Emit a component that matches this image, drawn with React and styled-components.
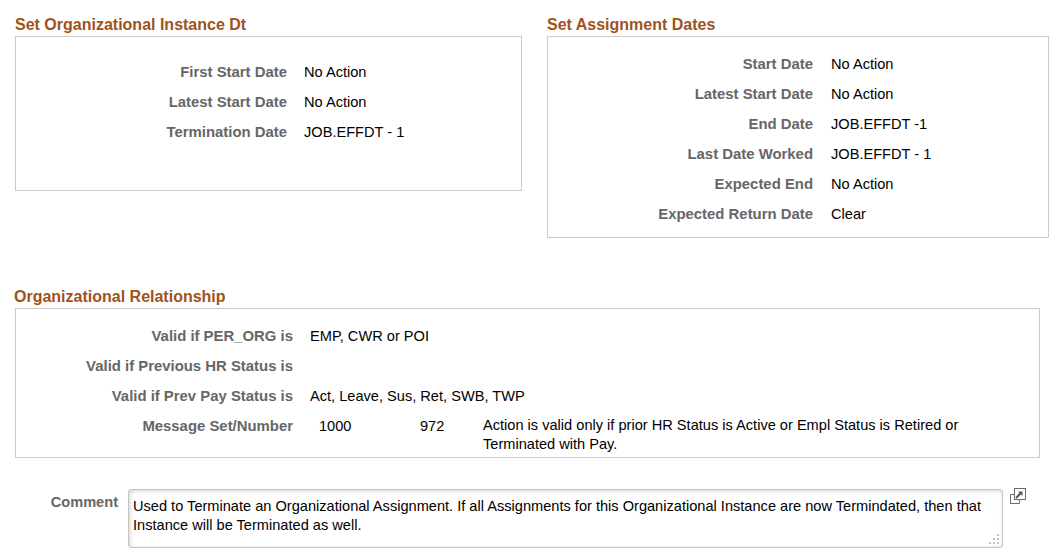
import React from 'react';
import styled, { createGlobalStyle } from 'styled-components';

const GlobalStyle = createGlobalStyle`
  html, body {
    margin: 0;
    padding: 0;
    background: #fff;
    font-family: "Liberation Sans", Arial, sans-serif;
  }
`;

const Page = styled.div`
  width: 1060px;
  height: 559px;
  overflow: hidden;
  padding-top: 16px;
  box-sizing: border-box;
`;

const TopRow = styled.div`
  display: flex;
  align-items: flex-start;
  gap: 25px;
  padding-left: 15px;
  height: 272px;
`;

const Section = styled.section`
  width: ${props => props.$width}px;
`;

const Title = styled.h2`
  margin: 0 0 2px ${props => props.$shift || 0}px;
  font-size: 16px;
  line-height: 18px;
  font-weight: bold;
  color: #a0521b;
`;

const Box = styled.div`
  box-sizing: border-box;
  height: ${props => props.$height}px;
  margin-left: ${props => props.$left || 0}px;
  padding-top: ${props => props.$top}px;
  border: 1px solid #cbcbcb;
`;

const Row = styled.div`
  display: flex;
  height: 30px;
  font-size: 14.6px;
  line-height: 20px;
`;

const Label = styled.div`
  flex: none;
  width: ${props => props.$width}px;
  text-align: right;
  font-size: 14.9px;
  font-weight: bold;
  color: #666;
`;

const Value = styled.div`
  margin-left: ${props => props.$gap}px;
  color: #000;
  white-space: nowrap;
`;

const MessageRow = styled(Row)`
  height: auto;
`;

const MessageNumber = styled.div`
  flex: none;
  width: ${props => props.$width}px;
  margin-left: ${props => props.$gap || 0}px;
  color: #000;
`;

const MessageText = styled.div`
  width: 510px;
  line-height: 19px;
  color: #000;
`;

const CommentRow = styled.div`
  display: flex;
  align-items: flex-start;
  margin-top: 31px;
  padding-left: 15px;
`;

const CommentLabel = styled.div`
  width: 103px;
  padding-top: 3px;
  text-align: right;
  font-size: 14.6px;
  line-height: 20px;
  font-weight: bold;
  color: #666;
`;

const CommentBox = styled.div`
  position: relative;
  box-sizing: border-box;
  flex: none;
  width: 875px;
  height: 59px;
  margin-left: 10px;
  padding: 7px 4px;
  border: 1px solid #c4c4c4;
  border-radius: 3px;
  box-shadow: inset 1px 1px 4px rgba(0, 0, 0, 0.18);
  font-size: 14.6px;
  line-height: 19px;
  color: #000;
`;

const Grip = styled.svg`
  position: absolute;
  right: 1px;
  bottom: 1px;
`;

const ExpandIcon = styled.svg`
  flex: none;
  margin: -1px 0 0 7px;
`;

const orgDates = [
  ['First Start Date', 'No Action'],
  ['Latest Start Date', 'No Action'],
  ['Termination Date', 'JOB.EFFDT - 1'],
];

const assignDates = [
  ['Start Date', 'No Action'],
  ['Latest Start Date', 'No Action'],
  ['End Date', 'JOB.EFFDT -1'],
  ['Last Date Worked', 'JOB.EFFDT - 1'],
  ['Expected End', 'No Action'],
  ['Expected Return Date', 'Clear'],
];

const relationship = [
  ['Valid if PER_ORG is', 'EMP, CWR or POI'],
  ['Valid if Previous HR Status is', ''],
  ['Valid if Prev Pay Status is', 'Act, Leave, Sus, Ret, SWB, TWP'],
];

const App = () => {
  return (
    <Page>
      <GlobalStyle />
      <TopRow>
        <Section $width={507}>
          <Title>Set Organizational Instance Dt</Title>
          <Box $height={155} $top={25}>
            {orgDates.map(([label, value]) => (
              <Row key={label}>
                <Label $width={271}>{label}</Label>
                <Value $gap={17}>{value}</Value>
              </Row>
            ))}
          </Box>
        </Section>
        <Section $width={502}>
          <Title>Set Assignment Dates</Title>
          <Box $height={202} $top={17}>
            {assignDates.map(([label, value]) => (
              <Row key={label}>
                <Label $width={265}>{label}</Label>
                <Value $gap={18}>{value}</Value>
              </Row>
            ))}
          </Box>
        </Section>
      </TopRow>
      <Section $width={1040}>
        <Title $shift={14}>Organizational Relationship</Title>
        <Box $height={150} $left={15} $top={17}>
          {relationship.map(([label, value]) => (
            <Row key={label}>
              <Label $width={277}>{label}</Label>
              <Value $gap={17}>{value}</Value>
            </Row>
          ))}
          <MessageRow>
            <Label $width={277}>Message Set/Number</Label>
            <MessageNumber $width={101} $gap={26}>1000</MessageNumber>
            <MessageNumber $width={63}>972</MessageNumber>
            <MessageText>Action is valid only if prior HR Status is Active or Empl Status is Retired or Terminated with Pay.</MessageText>
          </MessageRow>
        </Box>
      </Section>
      <CommentRow>
        <CommentLabel>Comment</CommentLabel>
        <CommentBox>
          Used to Terminate an Organizational Assignment. If all Assignments for this Organizational Instance are now Termindated, then that Instance will be Terminated as well.
          <Grip width="14" height="14" viewBox="0 0 14 14">
            <g fill="#c4c4c4">
              <rect x="10" y="2" width="2" height="2" />
              <rect x="6" y="6" width="2" height="2" />
              <rect x="10" y="6" width="2" height="2" />
              <rect x="2" y="10" width="2" height="2" />
              <rect x="6" y="10" width="2" height="2" />
              <rect x="10" y="10" width="2" height="2" />
            </g>
          </Grip>
        </CommentBox>
        <ExpandIcon width="16" height="16" viewBox="0 0 16 16">
          <rect x="4.5" y="0.5" width="11" height="11" fill="#fff" stroke="#6b6b6b" />
          <path d="M4 6.5H0.5V15.5H9.5V12" fill="none" stroke="#6b6b6b" />
          <path d="M6 10L10.5 5.5" fill="none" stroke="#555" strokeWidth="2" />
          <path d="M8 3.5H12.5V8Z" fill="#555" />
        </ExpandIcon>
      </CommentRow>
    </Page>
  );
};

export default App;
